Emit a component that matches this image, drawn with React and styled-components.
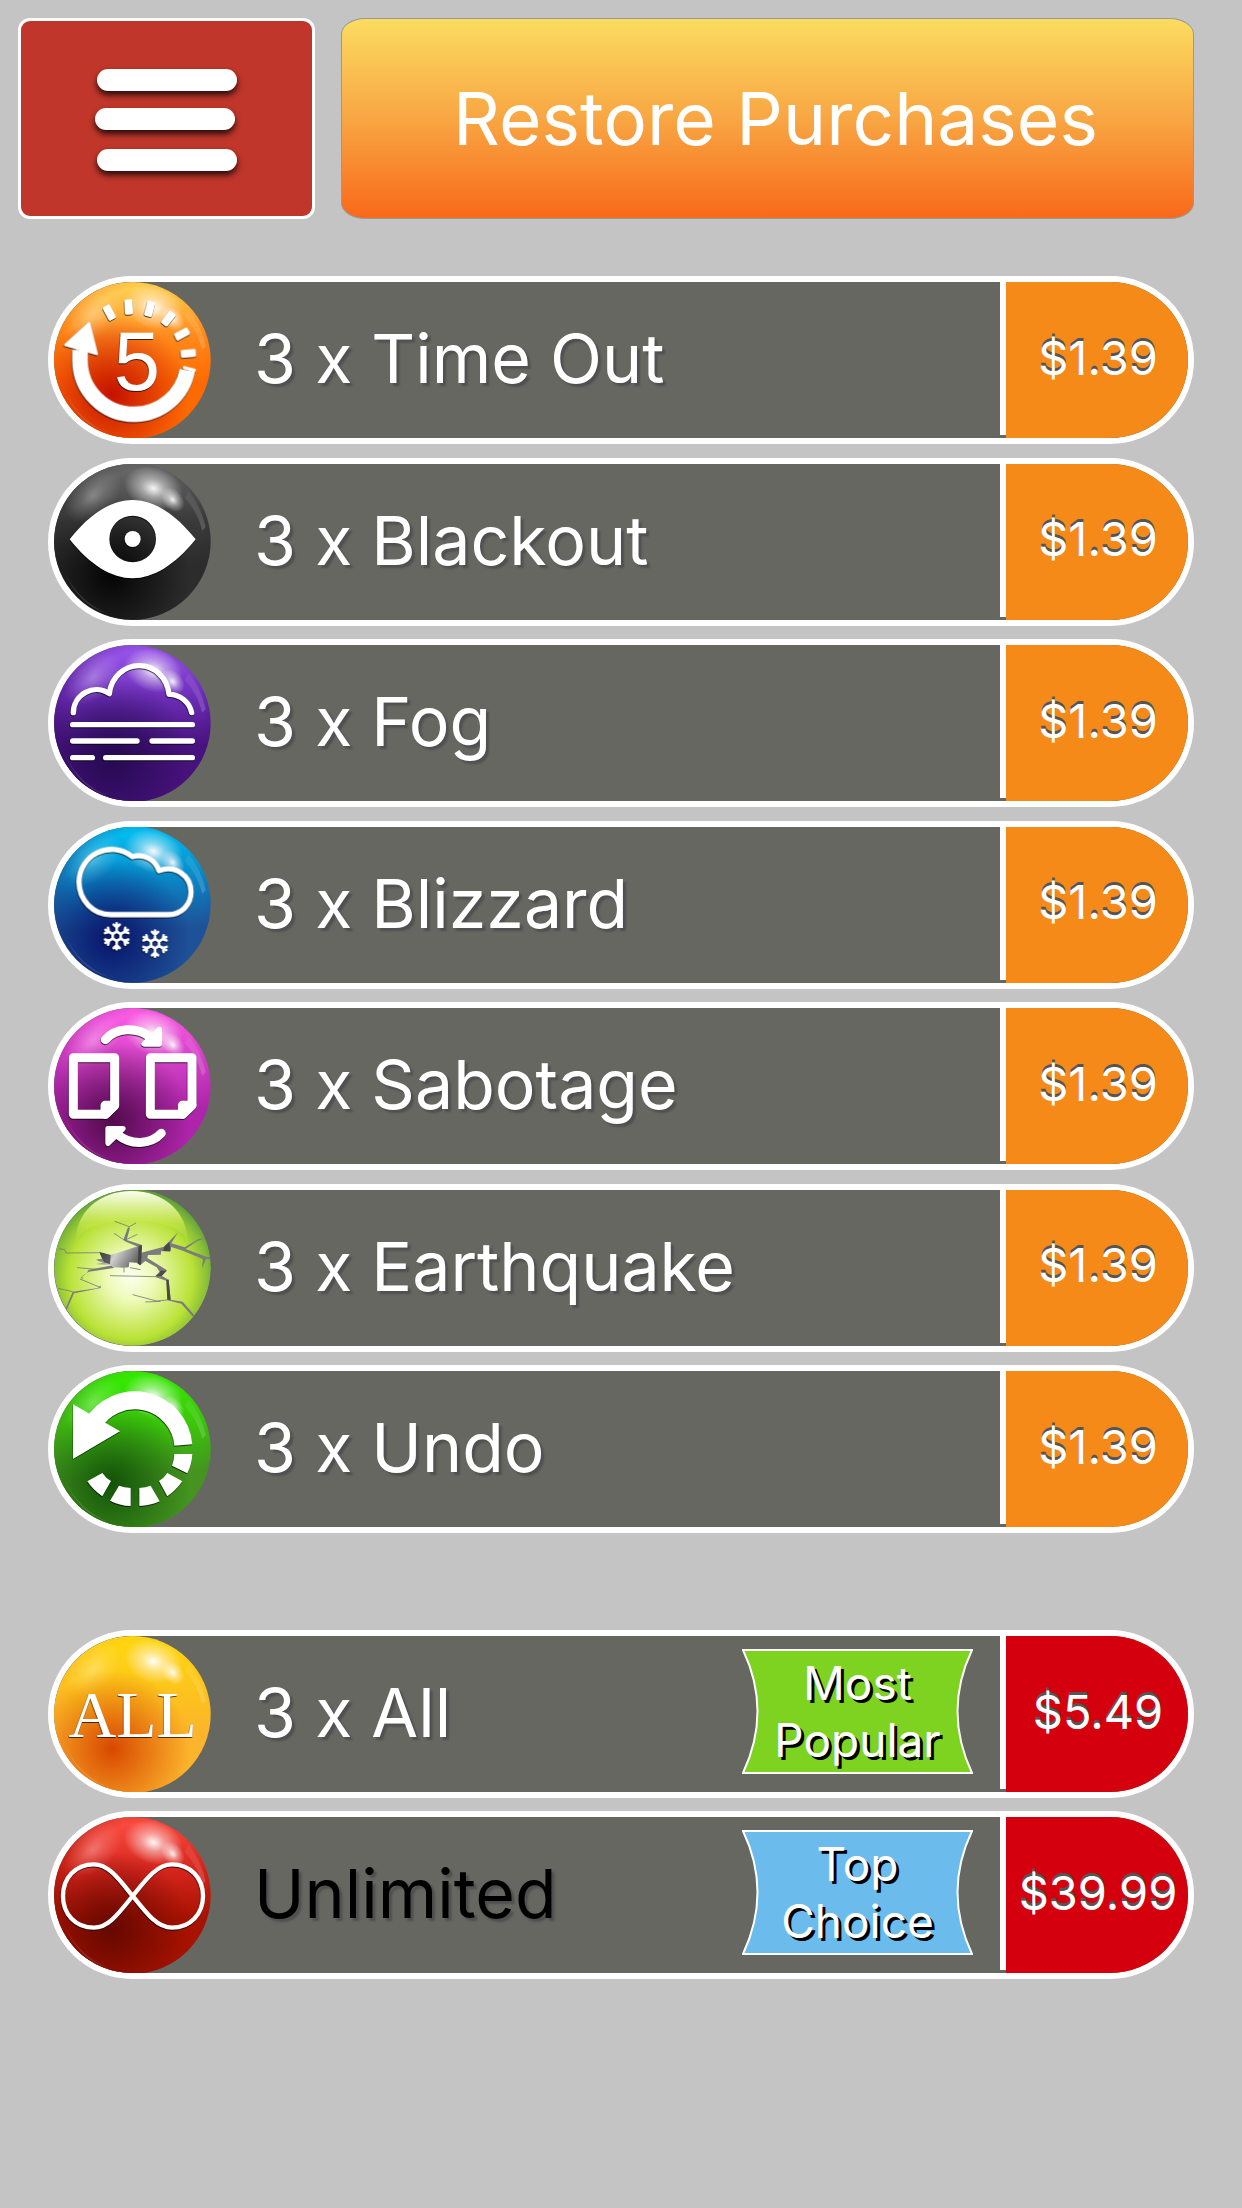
import React, { useId } from 'react'
import styled, { createGlobalStyle } from 'styled-components'

const powerUps = [
  { id: 'timeout', label: '3 x Time Out', price: '$1.39' },
  { id: 'blackout', label: '3 x Blackout', price: '$1.39' },
  { id: 'fog', label: '3 x Fog', price: '$1.39' },
  { id: 'blizzard', label: '3 x Blizzard', price: '$1.39' },
  { id: 'sabotage', label: '3 x Sabotage', price: '$1.39' },
  { id: 'earthquake', label: '3 x Earthquake', price: '$1.39' },
  { id: 'undo', label: '3 x Undo', price: '$1.39' },
]

const bundles = [
  { id: 'all', label: '3 x All', price: '$5.49', badge: ['Most', 'Popular'], badgeColor: '#7ed321' },
  { id: 'unlimited', label: 'Unlimited', price: '$39.99', badge: ['Top', 'Choice'], badgeColor: '#6bbcec', dark: true },
]

// top: offset of the ball in the drawing, the other values are its colours
const balls = {
  timeout: { top: 36, light: '#ffd858', mid: '#ff8a1c', dark: '#c41200', edge: '#ff6a00' },
  blackout: { top: 39, light: '#6c6c6c', mid: '#3c3c3c', dark: '#050505', edge: '#2c2c2c' },
  fog: { top: 45, light: '#9c58f0', mid: '#6a2cb4', dark: '#240a50', edge: '#48127e' },
  blizzard: { top: 42, light: '#00c4f4', mid: '#0a84c4', dark: '#08146a', edge: '#1e5298' },
  sabotage: { top: 39, light: '#ff60e8', mid: '#d040c4', dark: '#520a4c', edge: '#ae24aa' },
  undo: { top: 33, light: '#34f000', mid: '#3cc40c', dark: '#125408', edge: '#44941f' },
  all: { top: 48, light: '#ffd80c', mid: '#fcc41c', dark: '#d84800', edge: '#fcb42c' },
  unlimited: { top: 591, light: '#ff5044', mid: '#d4241c', dark: '#660800', edge: '#a81200' },
}

const ticks = [[208, 128, -28], [266, 111, -3], [329, 117, 15], [385, 146, 38], [426, 192, 62], [445, 250, 85]]

const Digit = styled.text`
  fill: #fff;
  font-family: 'Liberation Sans', sans-serif;
  font-size: 250px;
  text-anchor: middle;
`

const Letters = styled.text`
  fill: #fff;
  font-family: 'Liberation Serif', serif;
  font-size: 198px;
  text-anchor: middle;
`

function Flake({ x, y }) {
  return (
    <g transform={`translate(${x} ${y})`} fill="none" stroke="#fff" strokeWidth="8" strokeLinecap="round">
      <path d="M0 -14 L12 -7 V7 L0 14 L-12 7 V-7Z" />
      {[0, 60, 120, 180, 240, 300].map(a => (
        <path key={a} transform={`rotate(${a})`} d="M0 -14 V-39 M-9 -35 L0 -27 L9 -35" />
      ))}
    </g>
  )
}

const glyphs = {
  timeout: (
    <>
      <path d="M120 240 L120 272 A162 162 0 0 0 282 433 A162 162 0 0 0 442 301" fill="none" stroke="#fff" strokeWidth="47" />
      <path d="M433 293 L463 301" stroke="#fff" strokeWidth="10" strokeLinejoin="round" strokeLinecap="round" />
      <path d="M147 160 L76 225 L170 252Z" fill="#fff" stroke="#fff" strokeWidth="8" strokeLinejoin="round" />
      {ticks.map(([x, y, a]) => (
        <rect key={a} x="-12" y="-23" width="24" height="46" rx="5" fill="#fff" transform={`translate(${x} ${y}) rotate(${a})`} />
      ))}
      <Digit x="291" y="361">5</Digit>
    </>
  ),
  blackout: (
    <>
      <path fillRule="evenodd" fill="#fff" d="M89 268 C150 190 215 150 278 150 C340 150 405 190 467 268 C405 345 340 385 278 385 C215 385 150 345 89 268Z M278 197 A70 70 0 1 0 278 337 A70 70 0 1 0 278 197Z" />
      <circle cx="278" cy="267" r="24" fill="#fff" />
    </>
  ),
  fog: (
    <path
      fill="none" stroke="#fff" strokeWidth="16" strokeLinecap="round" strokeLinejoin="round"
      d="M100 248 A69 69 0 0 1 208 191 A90 95 0 0 1 387 193 A69 69 0 0 1 455 248 M98 284 H457 M98 333 H291 M336 333 H457 M98 383 H157 M197 383 H457"
    />
  ),
  blizzard: (
    <>
      <path
        fill="none" stroke="#fff" strokeWidth="16" strokeLinejoin="round"
        d="M212 308 H385 C425 308 453 278 453 240 C453 190 405 158 357 176 C346 142 310 124 277 134 C210 82 117 130 117 210 C117 265 160 308 212 308Z"
      />
      <Flake x={230} y={373} />
      <Flake x={345} y={395} />
    </>
  ),
  sabotage: (
    <g stroke="#fff" strokeWidth="27" strokeLinejoin="round" strokeLinecap="round" fill="none">
      <path d="M100 188 H224 V331 L197 358 H100Z" />
      <path d="M195 331 H224 L195 358Z" fill="#fff" />
      <path d="M331 188 H456 V331 L428 358 H331Z" />
      <path d="M427 331 H456 L427 358Z" fill="#fff" />
      <path d="M196 134 C228 98 290 94 330 126" />
      <path d="M364 415 C332 450 272 452 232 418" />
      <path d="M312 147 H358 V103Z M204 401 H249 L204 445Z" fill="#fff" strokeWidth="16" />
    </g>
  ),
  undo: (
    <>
      <path d="M158 194 A146 146 0 0 1 430 255" fill="none" stroke="#fff" strokeWidth="54" />
      <path
        fill="#fff"
        d="M99 133 L240 214 L99 297Z M403 282 H457 Q456 312 442 340 L396 317 Q402 302 403 282Z M382 339 L427 364 Q408 391 382 409 L357 363 Q372 354 382 339Z M332 377 L359 424 Q332 437 298 438 V384 Q318 383 332 377Z M237 377 Q252 383 272 384 V438 Q238 437 210 422Z M187 339 Q197 354 213 363 L187 409 Q158 389 142 364Z"
      />
    </>
  ),
  all: <Letters x="278" y="351">ALL</Letters>,
  unlimited: (
    <path
      fill="none" stroke="#fff" strokeWidth="13"
      d="M278 828 C235 775 205 733 162 733 C105 733 69 775 69 828 C69 881 105 923 162 923 C205 923 235 881 278 828 C320 775 352 733 396 733 C452 733 489 775 489 828 C489 881 452 923 396 923 C352 923 320 881 278 828Z"
    />
  ),
}

function Ball({ id }) {
  const uid = useId()
  const { top, light, mid, dark, edge } = balls[id]
  return (
    <Orb viewBox={`42 ${top} 471 471`} aria-hidden="true">
      <defs>
        <linearGradient id={`${uid}b`} x1="0.5" y1="0" x2="0.55" y2="1">
          <stop offset="0" stopColor={light} />
          <stop offset="0.36" stopColor={mid} />
          <stop offset="0.66" stopColor={edge} />
          <stop offset="1" stopColor={edge} />
        </linearGradient>
        <radialGradient id={`${uid}d`} cx="0.37" cy="0.72" r="0.5">
          <stop offset="0" stopColor={dark} />
          <stop offset="0.3" stopColor={dark} stopOpacity="0.7" />
          <stop offset="1" stopColor={dark} stopOpacity="0" />
        </radialGradient>
        <radialGradient id={`${uid}e`} cx="0.55" cy="0.45" r="0.58">
          <stop offset="0.7" stopColor={edge} stopOpacity="0" />
          <stop offset="1" stopColor={edge} stopOpacity="0.7" />
        </radialGradient>
        <radialGradient id={`${uid}w`}>
          <stop offset="0" stopColor="#fff" />
          <stop offset="0.4" stopColor="#fff" stopOpacity="0.5" />
          <stop offset="1" stopColor="#fff" stopOpacity="0" />
        </radialGradient>
        <linearGradient id={`${uid}s`} x1="0" y1="0" x2="0" y2="1">
          <stop offset="0" stopColor="#fff" stopOpacity="0.05" />
          <stop offset="1" stopColor="#fff" stopOpacity="0.18" />
        </linearGradient>
      </defs>
      <g transform={`translate(42 ${top})`}>
        <circle cx="235" cy="235" r="235" fill={`url(#${uid}b)`} />
        <circle cx="235" cy="235" r="235" fill={`url(#${uid}e)`} />
        <circle cx="235" cy="235" r="235" fill={`url(#${uid}d)`} />
        <ellipse cx="118" cy="98" rx="100" ry="62" fill={`url(#${uid}w)`} opacity="0.3" transform="rotate(-42 118 98)" />
        <ellipse cx="298" cy="76" rx="90" ry="64" fill={`url(#${uid}w)`} opacity="0.95" transform="rotate(18 298 76)" />
        <ellipse cx="356" cy="110" rx="42" ry="30" fill={`url(#${uid}w)`} opacity="0.9" transform="rotate(48 356 110)" />
        <path d="M404 85 Q440 128 455 192 L445 203 Q430 145 392 104Z" fill={`url(#${uid}s)`} />
        <path d="M32 328 Q76 418 162 452 Q76 430 32 328Z" fill="#fff" opacity="0.12" />
      </g>
      <Glyph>{glyphs[id]}</Glyph>
    </Orb>
  )
}

function QuakeBall() {
  return (
    <Orb viewBox="42 42 471 471" aria-hidden="true">
      <defs>
        <radialGradient id="quake-ball" cx="0.49" cy="0.56" r="0.6">
          <stop offset="0" stopColor="#fbffee" />
          <stop offset="0.25" stopColor="#eefab8" />
          <stop offset="0.66" stopColor="#b9e236" />
          <stop offset="0.82" stopColor="#86bd38" />
          <stop offset="1" stopColor="#3f8a38" />
        </radialGradient>
        <linearGradient id="quake-gloss" x1="0" y1="0" x2="0" y2="1">
          <stop offset="0" stopColor="#fcfff0" />
          <stop offset="0.6" stopColor="#c4e648" stopOpacity="0.85" />
          <stop offset="1" stopColor="#c4e648" stopOpacity="0" />
        </linearGradient>
        <linearGradient id="quake-rock" x1="0" y1="0" x2="1" y2="0.3">
          <stop offset="0" stopColor="#4a4a4a" />
          <stop offset="0.25" stopColor="#7a7a7a" />
          <stop offset="0.5" stopColor="#d0d0d0" />
          <stop offset="1" stopColor="#666" />
        </linearGradient>
        <clipPath id="quake-clip"><circle cx="277.5" cy="277.5" r="235" /></clipPath>
      </defs>
      <g clipPath="url(#quake-clip)">
        <circle cx="277.5" cy="277.5" r="235.5" fill="url(#quake-ball)" />
        <path d="M107 205 C105 110 180 48 275 48 C370 48 445 110 443 205 Q430 140 275 138 Q122 140 107 205Z" fill="url(#quake-gloss)" />
        <g fill="#7c7c7c">
          <path d="M250 194 L264 157 L270 158 L260 195 L306 210 L296 216 L258 200Z" />
          <path d="M304 233 L372 215 L414 172 L394 205 L434 217 L474 193 L497 189 L470 199 L437 222 L500 246 L513 246 V251 L498 252 L486 281 L489 252 L425 226 L394 216 L390 230 L364 228 L362 239 L324 240 L322 249 L381 286 L366 303 L386 314 L392 374 L428 380 L466 424 L460 427 L424 386 L382 376 L379 317 L343 305 L362 295 L350 277 L316 258 L300 271Z" />
          <path d="M218 271 L146 284 L140 295 L122 308 L130 312 L125 304 L147 290 L222 279Z" />
          <path d="M182 331 L174 339 L98 350 L76 402 L80 405 L102 355 L182 339Z" />
        </g>
        <path
          fill="url(#quake-rock)"
          d="M178 231 L212 240 L296 213 L306 210 L304 250 L300 271 L290 263 L268 262 L266 277 L250 278 L218 277 L214 271 L168 267 L190 264 L168 254 L186 251Z"
        />
        <path d="M178 231 L212 240 L210 268 L192 262Z M295 213 L306 210 L303 271 L294 266Z M372 215 L388 201 L392 228 L370 228Z M379 315 L386 314 L392 374 L382 375Z M362 287 L380 287 L364 303 L346 303Z" fill="#333" opacity="0.7" />
        <path
          fill="none" stroke="#777" strokeWidth="3" opacity="0.8"
          d="M224 139 L268 155 L288 144 M222 175 L254 196 L292 178 M182 233 L78 234 L74 224 L58 221 M210 302 L345 305 M278 359 L350 378 L382 375 M316 381 L362 379 M55 340 L98 350 M120 312 L178 336 M112 278 L170 283 M252 278 V292 M270 278 L302 284"
        />
      </g>
    </Orb>
  )
}

function Badge({ lines, color }) {
  return (
    <BadgeBox>
      <Ribbon viewBox="0 0 231 125" preserveAspectRatio="none" aria-hidden="true">
        <path d="M1 1 H230 Q201 62 230 124 H1 Q30 62 1 1Z" fill={color} stroke="#fff" strokeWidth="2" />
      </Ribbon>
      <BadgeText>{lines[0]}<br />{lines[1]}</BadgeText>
    </BadgeBox>
  )
}

function Product({ item, red }) {
  return (
    <li>
      <Row type="button">
        {item.id === 'earthquake' ? <QuakeBall /> : <Ball id={item.id} />}
        <Name $dark={item.dark}>{item.label}</Name>
        {item.badge && <Badge lines={item.badge} color={item.badgeColor} />}
        <Divider />
        <Price $red={red}>{item.price}</Price>
      </Row>
    </li>
  )
}

export default function App() {
  return (
    <>
      <GlobalStyle />
      <Header>
        <MenuButton type="button" aria-label="Menu">
          <Bars viewBox="0 0 144 102" aria-hidden="true">
            <rect x="2" y="0" width="140" height="22" rx="11" />
            <rect x="0" y="39" width="140" height="22" rx="11" />
            <rect x="2" y="80" width="140" height="22" rx="11" />
          </Bars>
        </MenuButton>
        <RestoreButton type="button">Restore Purchases</RestoreButton>
      </Header>
      <Shop>
        <PowerUpList>
          {powerUps.map(item => <Product key={item.id} item={item} />)}
        </PowerUpList>
        <BundleList>
          {bundles.map(item => <Product key={item.id} item={item} red />)}
        </BundleList>
      </Shop>
    </>
  )
}

const GlobalStyle = createGlobalStyle`
  * {
    box-sizing: border-box;
  }
  body {
    margin: 0;
    background: #c4c4c4;
    font-family: Inter, Roboto, sans-serif;
  }
  button {
    font-family: inherit;
    cursor: pointer;
  }
`

const Header = styled.header`
  display: flex;
  gap: 26px;
  padding: 18px 48px 0 18px;
`

const MenuButton = styled.button`
  display: flex;
  align-items: center;
  justify-content: center;
  flex: none;
  width: 297px;
  height: 201px;
  padding: 2px 0 0;
  border: 3px solid #fff;
  border-radius: 12px;
  background: #c0362a;
`

const Bars = styled.svg`
  width: 144px;
  height: 102px;
  overflow: visible;
  fill: #fff;
  filter: drop-shadow(0 4px 3px rgba(0, 0, 0, 0.8));
`

const RestoreButton = styled.button`
  flex: 1;
  min-height: 201px;
  padding: 0 0 0 16px;
  border: 1px solid #999;
  border-radius: 24px / 16px;
  background: linear-gradient(#fbdc60, #f8a643 50%, #f9691a);
  color: #fff;
  font-size: 73px;
`

const Shop = styled.main`
  padding: 57px 48px;
`

const List = styled.ul`
  display: grid;
  align-content: space-between;
  margin: 0;
  padding: 0;
  list-style: none;
`

const PowerUpList = styled(List)`
  min-height: 1257px;
`

const BundleList = styled(List)`
  min-height: 349px;
  margin-top: 97px;
`

const Row = styled.button`
  display: flex;
  align-items: center;
  width: 100%;
  height: 168px;
  padding: 0;
  border: 6px solid #fff;
  border-radius: 84px;
  background: #666761;
  color: #fff;
  text-align: left;
  overflow: hidden;
`

const Orb = styled.svg`
  flex: none;
  width: 157px;
  height: 157px;
`

const Glyph = styled.g`
  filter: drop-shadow(-1px 3px 2px rgba(0, 0, 0, 0.7));
`

const Name = styled.span`
  flex: 1;
  padding: 0 0 4px 43px;
  color: ${props => (props.$dark ? '#000' : '#fff')};
  font-size: 68px;
  text-shadow: 3px 3px 2px #505050;
`

const BadgeBox = styled.span`
  display: grid;
  place-items: center;
  width: 231px;
  height: 125px;
  margin: 0 27px 5px 0;
`

const Ribbon = styled.svg`
  grid-area: 1 / 1;
  width: 100%;
  height: 100%;
`

const BadgeText = styled.span`
  grid-area: 1 / 1;
  font-size: 46px;
  line-height: 57px;
  text-align: center;
  text-shadow: 3px 3px 0 #000;
`

const Divider = styled.span`
  align-self: stretch;
  width: 6px;
  margin-bottom: 3px;
  background: #fff;
`

const Price = styled.span`
  display: flex;
  align-items: center;
  justify-content: center;
  align-self: stretch;
  width: 182px;
  padding: 0 0 6px 2px;
  background: ${props => (props.$red ? '#d5000e' : '#f58a18')};
  font-size: 47px;
  text-shadow: 0 -3px 0 #555;
`
